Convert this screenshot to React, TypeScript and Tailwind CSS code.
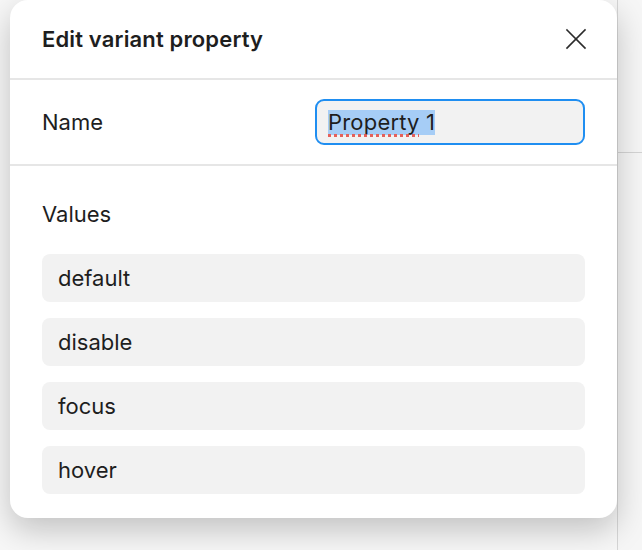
const VALUES = ['default', 'disable', 'focus', 'hover'];

function CloseIcon() {
  return (
    <svg width="22" height="22" viewBox="0 0 22 22" fill="none" stroke="#2b2b2b" strokeWidth="1.6" strokeLinecap="square">
      <path d="M2 2L20 20" />
      <path d="M20 2L2 20" />
    </svg>
  );
}

export default function App() {
  return (
    <div
      className="relative w-[642px] h-[550px] overflow-hidden bg-[#f7f7f7] text-[#1e1e1e]"
      style={{ fontFamily: 'Inter, "Noto Sans", sans-serif' }}
    >
      {/* canvas behind the modal */}
      <div className="absolute top-0 bottom-0 left-[617px] right-0 border-l border-[#d6d6d6] bg-[#f6f6f6]">
        <div className="mt-[152px] h-px bg-[#d4d4d4]" />
      </div>

      <div className="absolute left-[10px] top-0 w-[607px] rounded-[18px] bg-white shadow-[0_12px_32px_rgba(0,0,0,0.22)]">
        <div className="flex h-[78px] items-center justify-between px-8">
          <h2 className="text-[22px] font-semibold leading-7 tracking-[0.15px]">Edit variant property</h2>
          <button className="-mr-[3px] flex h-6 w-6 items-center justify-center">
            <CloseIcon />
          </button>
        </div>
        <div className="h-[2px] bg-[#e6e6e6]" />

        <div className="flex h-[84px] items-center justify-between px-8">
          <span className="text-[22px] leading-7">Name</span>
          <div className="flex h-[46px] w-[270px] items-center rounded-[9px] border-2 border-[#1f8ef1] bg-[#f2f2f2] pl-[11px]">
            <span className="bg-[#a6cdf6] text-[22px] leading-[25px] tracking-[0.2px] underline decoration-dotted decoration-[#e5605a] decoration-[3px] underline-offset-[4px] [text-decoration-skip-ink:none]">
              Property
            </span>
            <span className="bg-[#a6cdf6] text-[22px] leading-[25px]">&nbsp;1</span>
          </div>
        </div>
        <div className="h-[2px] bg-[#e6e6e6]" />

        <div className="px-8 pt-[34px] pb-6">
          <div className="mb-[26px] text-[22px] leading-7">Values</div>
          <div className="flex flex-col gap-4">
            {VALUES.map(v => (
              <div key={v} className="flex h-12 items-center rounded-lg bg-[#f2f2f2] pl-4 pt-px text-[22px]">
                {v}
              </div>
            ))}
          </div>
        </div>
      </div>
    </div>
  );
}
